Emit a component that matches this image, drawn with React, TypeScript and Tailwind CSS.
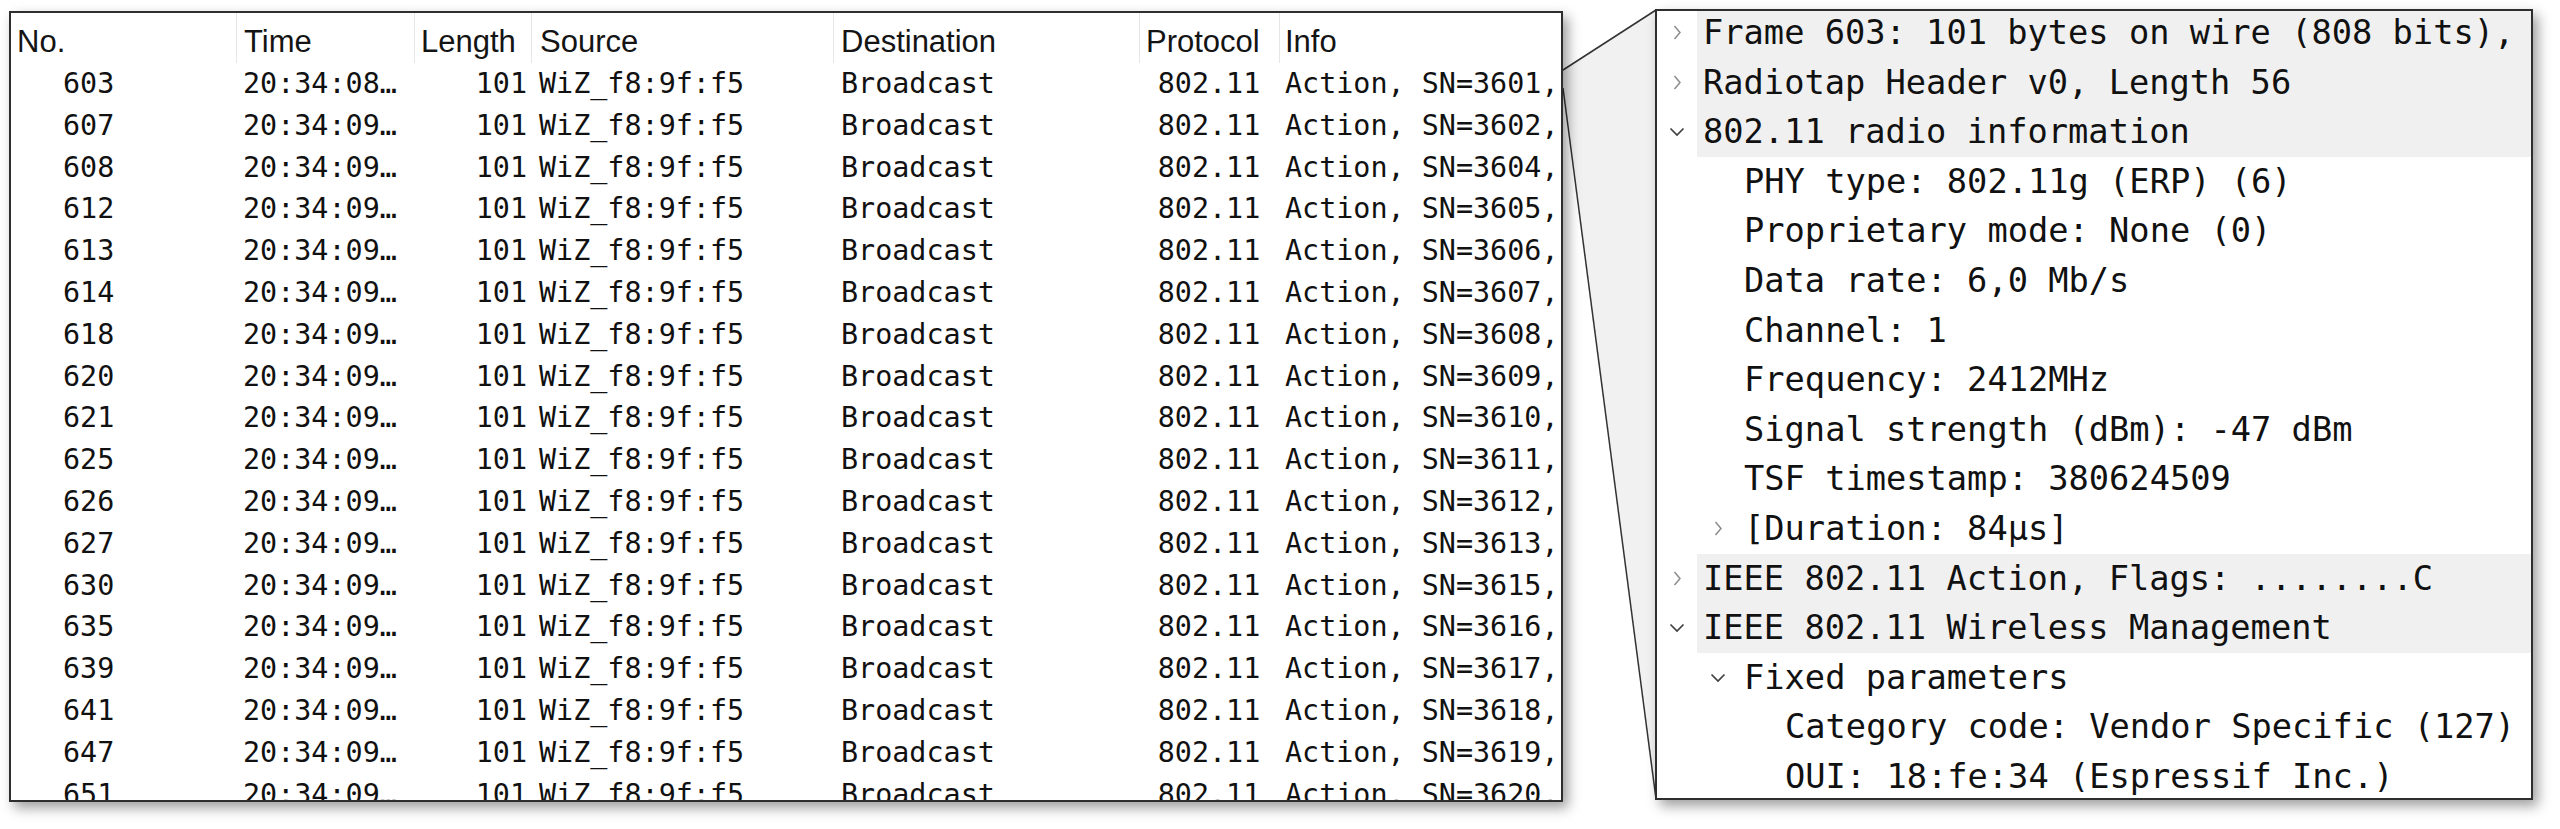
import clsx from 'clsx'

type Packet = [number, string, number]

const packets: Packet[] = [
  [603, '20:34:08…', 3601],
  [607, '20:34:09…', 3602],
  [608, '20:34:09…', 3604],
  [612, '20:34:09…', 3605],
  [613, '20:34:09…', 3606],
  [614, '20:34:09…', 3607],
  [618, '20:34:09…', 3608],
  [620, '20:34:09…', 3609],
  [621, '20:34:09…', 3610],
  [625, '20:34:09…', 3611],
  [626, '20:34:09…', 3612],
  [627, '20:34:09…', 3613],
  [630, '20:34:09…', 3615],
  [635, '20:34:09…', 3616],
  [639, '20:34:09…', 3617],
  [641, '20:34:09…', 3618],
  [647, '20:34:09…', 3619],
  [651, '20:34:09…', 3620],
]

type Detail = {
  level: 0 | 1 | 2
  arrow?: 'right' | 'down'
  text: string
  top?: boolean
}

const details: Detail[] = [
  { level: 0, arrow: 'right', top: true, text: 'Frame 603: 101 bytes on wire (808 bits),' },
  { level: 0, arrow: 'right', top: true, text: 'Radiotap Header v0, Length 56' },
  { level: 0, arrow: 'down', top: true, text: '802.11 radio information' },
  { level: 1, text: 'PHY type: 802.11g (ERP) (6)' },
  { level: 1, text: 'Proprietary mode: None (0)' },
  { level: 1, text: 'Data rate: 6,0 Mb/s' },
  { level: 1, text: 'Channel: 1' },
  { level: 1, text: 'Frequency: 2412MHz' },
  { level: 1, text: 'Signal strength (dBm): -47 dBm' },
  { level: 1, text: 'TSF timestamp: 380624509' },
  { level: 1, arrow: 'right', text: '[Duration: 84µs]' },
  { level: 0, arrow: 'right', top: true, text: 'IEEE 802.11 Action, Flags: ........C' },
  { level: 0, arrow: 'down', top: true, text: 'IEEE 802.11 Wireless Management' },
  { level: 1, arrow: 'down', text: 'Fixed parameters' },
  { level: 2, text: 'Category code: Vendor Specific (127)' },
  { level: 2, text: 'OUI: 18:fe:34 (Espressif Inc.)' },
]

const indent = { 0: 'pl-0', 1: 'pl-[41px]', 2: 'pl-[82px]' }

function Chevron({ dir }: { dir: 'right' | 'down' }) {
  if (dir === 'right') {
    return (
      <svg width="10" height="15" viewBox="0 0 10 15">
        <polyline points="2.5,1 8,7.5 2.5,14" fill="none" stroke="#8c8c8c" strokeWidth="1.5" />
      </svg>
    )
  }
  return (
    <svg width="16" height="10" viewBox="0 0 16 10">
      <polyline points="1.5,1.5 8,8 14.5,1.5" fill="none" stroke="#404040" strokeWidth="1.7" />
    </svg>
  )
}

function PacketRow({ packet }: { packet: Packet }) {
  const [no, time, sn] = packet
  return (
    <div className="flex h-[41.8px] shrink-0 leading-[41.8px] whitespace-nowrap">
      <div className="w-[225px] shrink-0 pl-[52px]">{no}</div>
      <div className="w-[178px] shrink-0 pl-[7px]">{time}</div>
      <div className="w-[117px] shrink-0 pr-[4px] text-right">101</div>
      <div className="w-[302px] shrink-0 pl-[8px]">WiZ_f8:9f:f5</div>
      <div className="w-[306px] shrink-0 pl-[8px]">Broadcast</div>
      <div className="w-[140px] shrink-0 text-center">802.11</div>
      <div className="min-w-0 flex-1 overflow-hidden pl-[6px]">Action, SN={sn},</div>
    </div>
  )
}

function PacketList() {
  return (
    <div className="relative mt-[2px] flex h-[791px] w-[1554px] shrink-0 flex-col overflow-hidden border-2 border-[#2e2e2e] bg-white shadow-[5px_6px_12px_rgba(0,0,0,0.38)]">
      <div className="flex h-[50px] shrink-0 font-['Liberation_Sans',Arial,sans-serif] text-[31px] leading-[36px] text-[#141414]">
        <div className="w-[225px] shrink-0 pt-[11px] pl-[6px]">No.</div>
        <div className="w-[178px] shrink-0 border-l border-[#e6e6e6] pt-[11px] pl-[7px]">Time</div>
        <div className="w-[117px] shrink-0 border-l border-[#e6e6e6] pt-[11px] pl-[6px]">Length</div>
        <div className="w-[302px] shrink-0 border-l border-[#e6e6e6] pt-[11px] pl-[8px]">Source</div>
        <div className="w-[306px] shrink-0 border-l border-[#e6e6e6] pt-[11px] pl-[7px]">Destination</div>
        <div className="w-[140px] shrink-0 border-l border-[#e6e6e6] pt-[11px] pl-[6px]">Protocol</div>
        <div className="flex-1 border-l border-[#e6e6e6] pt-[11px] pl-[5px]">Info</div>
      </div>
      <div className="flex flex-col font-['DejaVu_Sans_Mono',monospace] text-[28.4px] text-[#111]">
        {packets.map((p) => (
          <PacketRow key={p[0]} packet={p} />
        ))}
      </div>
    </div>
  )
}

function DetailTree() {
  return (
    <div className="relative ml-[92px] h-[791px] w-[878px] shrink-0 overflow-hidden border-2 border-[#2e2e2e] bg-white shadow-[5px_6px_12px_rgba(0,0,0,0.38)]">
      <div className="-mt-[3px] flex flex-col font-['DejaVu_Sans_Mono',monospace] text-[33.7px] leading-[49.6px] text-[#111]">
        {details.map((d, i) => (
          <div key={i} className={clsx('flex h-[49.6px] shrink-0 whitespace-nowrap', indent[d.level])}>
            <div className="flex w-[40px] shrink-0 items-center justify-center">
              {d.arrow && <Chevron dir={d.arrow} />}
            </div>
            <div className={clsx('min-w-0 flex-1 overflow-hidden pl-[6px]', d.top && 'bg-[#f0f0f0]')}>
              {d.text}
            </div>
          </div>
        ))}
      </div>
    </div>
  )
}

export default function App() {
  return (
    <div className="relative h-[829px] w-[2560px] overflow-hidden bg-white">
      {/* callout joining the selected packet to its detail pane */}
      <svg className="pointer-events-none absolute inset-0" width="2560" height="829">
        <polygon points="1563,70 1656,10 1656,799 1563,88" fill="#f1f1f1" />
        <line x1="1563" y1="70" x2="1656" y2="10" stroke="#333" strokeWidth="1.5" />
        <line x1="1563" y1="88" x2="1656" y2="799" stroke="#333" strokeWidth="1.5" />
      </svg>
      <div className="flex items-start pt-[9px] pl-[9px]">
        <PacketList />
        <DetailTree />
      </div>
    </div>
  )
}
